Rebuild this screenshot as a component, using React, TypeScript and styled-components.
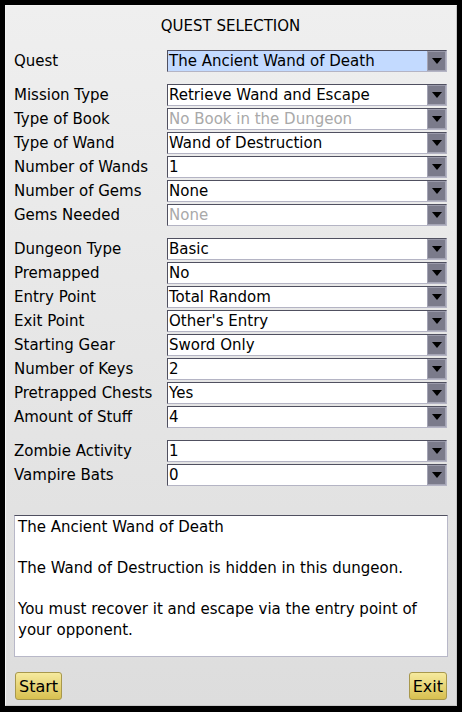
import styled, { createGlobalStyle } from "styled-components";

const GlobalStyle = createGlobalStyle`
  html, body {
    margin: 0;
    padding: 0;
    background: #000000;
  }
  * {
    box-sizing: border-box;
  }
`;

const StyledPanel = styled.div`
  margin: 5px 0 0 5px;
  width: 452px;
  height: 701px;
  display: flex;
  flex-direction: column;
  padding: 0 9px 5px 8px;
  background: linear-gradient(#efefef, #dddddd);
  border: 1px solid #c8c8c8;
  border-top-color: #f4f4f4;
  border-left-color: #f4f4f4;
  font-family: "DejaVu Sans", Verdana, sans-serif;
  font-size: 15px;
  color: #000000;
`;

const StyledTitle = styled.div`
  text-align: center;
  height: 44px;
  padding-top: 11px;
  line-height: 18px;
`;

const StyledGroups = styled.div`
  display: flex;
  flex-direction: column;
  gap: 12px;
`;

const StyledGroup = styled.div`
  display: flex;
  flex-direction: column;
  gap: 2px;
`;

const StyledRow = styled.div`
  display: flex;
  align-items: center;
  height: 22px;
`;

const StyledLabel = styled.div`
  width: 153px;
  flex-shrink: 0;
  white-space: nowrap;
`;

const StyledSelect = styled.div<{ $selected?: boolean; $disabled?: boolean }>`
  flex: 1;
  height: 22px;
  display: flex;
  align-items: stretch;
  background: ${(p) => (p.$selected ? "#c3daff" : "#ffffff")};
  color: ${(p) => (p.$disabled ? "#a9a9a9" : "#000000")};
  border: 1px solid #b4b4c4;
  border-top-color: #505060;
  border-left-color: #505060;
`;

const StyledValue = styled.div`
  flex: 1;
  padding-left: 1px;
  line-height: 20px;
  white-space: nowrap;
  overflow: hidden;
`;

const StyledArrow = styled.div`
  width: 19px;
  background: #7b7b8b;
  border: 1px solid #a4a4b4;
  border-top-color: #9a9aaa;
  display: flex;
  align-items: center;
  justify-content: center;
  &::after {
    content: "";
    width: 0;
    height: 0;
    border-left: 5px solid transparent;
    border-right: 5px solid transparent;
    border-top: 6px solid #000000;
  }
`;

const StyledInfo = styled.div`
  margin: 29px -1px 0 0;
  height: 142px;
  background: #ffffff;
  border: 1px solid #b8b8c8;
  border-top-color: #505060;
  padding: 1px 3px 0 3px;
  line-height: 21px;
`;

const StyledInfoLine = styled.p`
  margin: 0 0 20px 0;
  &:last-child {
    margin-bottom: 0;
  }
`;

const StyledFooter = styled.div`
  margin-top: auto;
  display: flex;
  justify-content: space-between;
  align-items: flex-end;
  padding-left: 1px;
`;

const StyledButton = styled.button`
  height: 28px;
  padding: 0 3px;
  font-family: "DejaVu Sans", Verdana, sans-serif;
  font-size: 16px;
  color: #000000;
  background: linear-gradient(#f6ea9e, #d8c050);
  border: 1px solid #a8984c;
  border-radius: 3px;
`;

type Field = {
  label: string;
  value: string;
  selected?: boolean;
  disabled?: boolean;
};

const groups: Field[][] = [
  [{ label: "Quest", value: "The Ancient Wand of Death", selected: true }],
  [
    { label: "Mission Type", value: "Retrieve Wand and Escape" },
    { label: "Type of Book", value: "No Book in the Dungeon", disabled: true },
    { label: "Type of Wand", value: "Wand of Destruction" },
    { label: "Number of Wands", value: "1" },
    { label: "Number of Gems", value: "None" },
    { label: "Gems Needed", value: "None", disabled: true },
  ],
  [
    { label: "Dungeon Type", value: "Basic" },
    { label: "Premapped", value: "No" },
    { label: "Entry Point", value: "Total Random" },
    { label: "Exit Point", value: "Other's Entry" },
    { label: "Starting Gear", value: "Sword Only" },
    { label: "Number of Keys", value: "2" },
    { label: "Pretrapped Chests", value: "Yes" },
    { label: "Amount of Stuff", value: "4" },
  ],
  [
    { label: "Zombie Activity", value: "1" },
    { label: "Vampire Bats", value: "0" },
  ],
];

export default function App() {
  return (
    <>
      <GlobalStyle />
      <StyledPanel>
        <StyledTitle>QUEST SELECTION</StyledTitle>
        <StyledGroups>
          {groups.map((group, gi) => (
            <StyledGroup key={gi}>
              {group.map((f) => (
                <StyledRow key={f.label}>
                  <StyledLabel>{f.label}</StyledLabel>
                  <StyledSelect $selected={f.selected} $disabled={f.disabled}>
                    <StyledValue>{f.value}</StyledValue>
                    <StyledArrow />
                  </StyledSelect>
                </StyledRow>
              ))}
            </StyledGroup>
          ))}
        </StyledGroups>
        <StyledInfo>
          <StyledInfoLine>The Ancient Wand of Death</StyledInfoLine>
          <StyledInfoLine>The Wand of Destruction is hidden in this dungeon.</StyledInfoLine>
          <StyledInfoLine>
            You must recover it and escape via the entry point of your opponent.
          </StyledInfoLine>
        </StyledInfo>
        <StyledFooter>
          <StyledButton>Start</StyledButton>
          <StyledButton>Exit</StyledButton>
        </StyledFooter>
      </StyledPanel>
    </>
  );
}
